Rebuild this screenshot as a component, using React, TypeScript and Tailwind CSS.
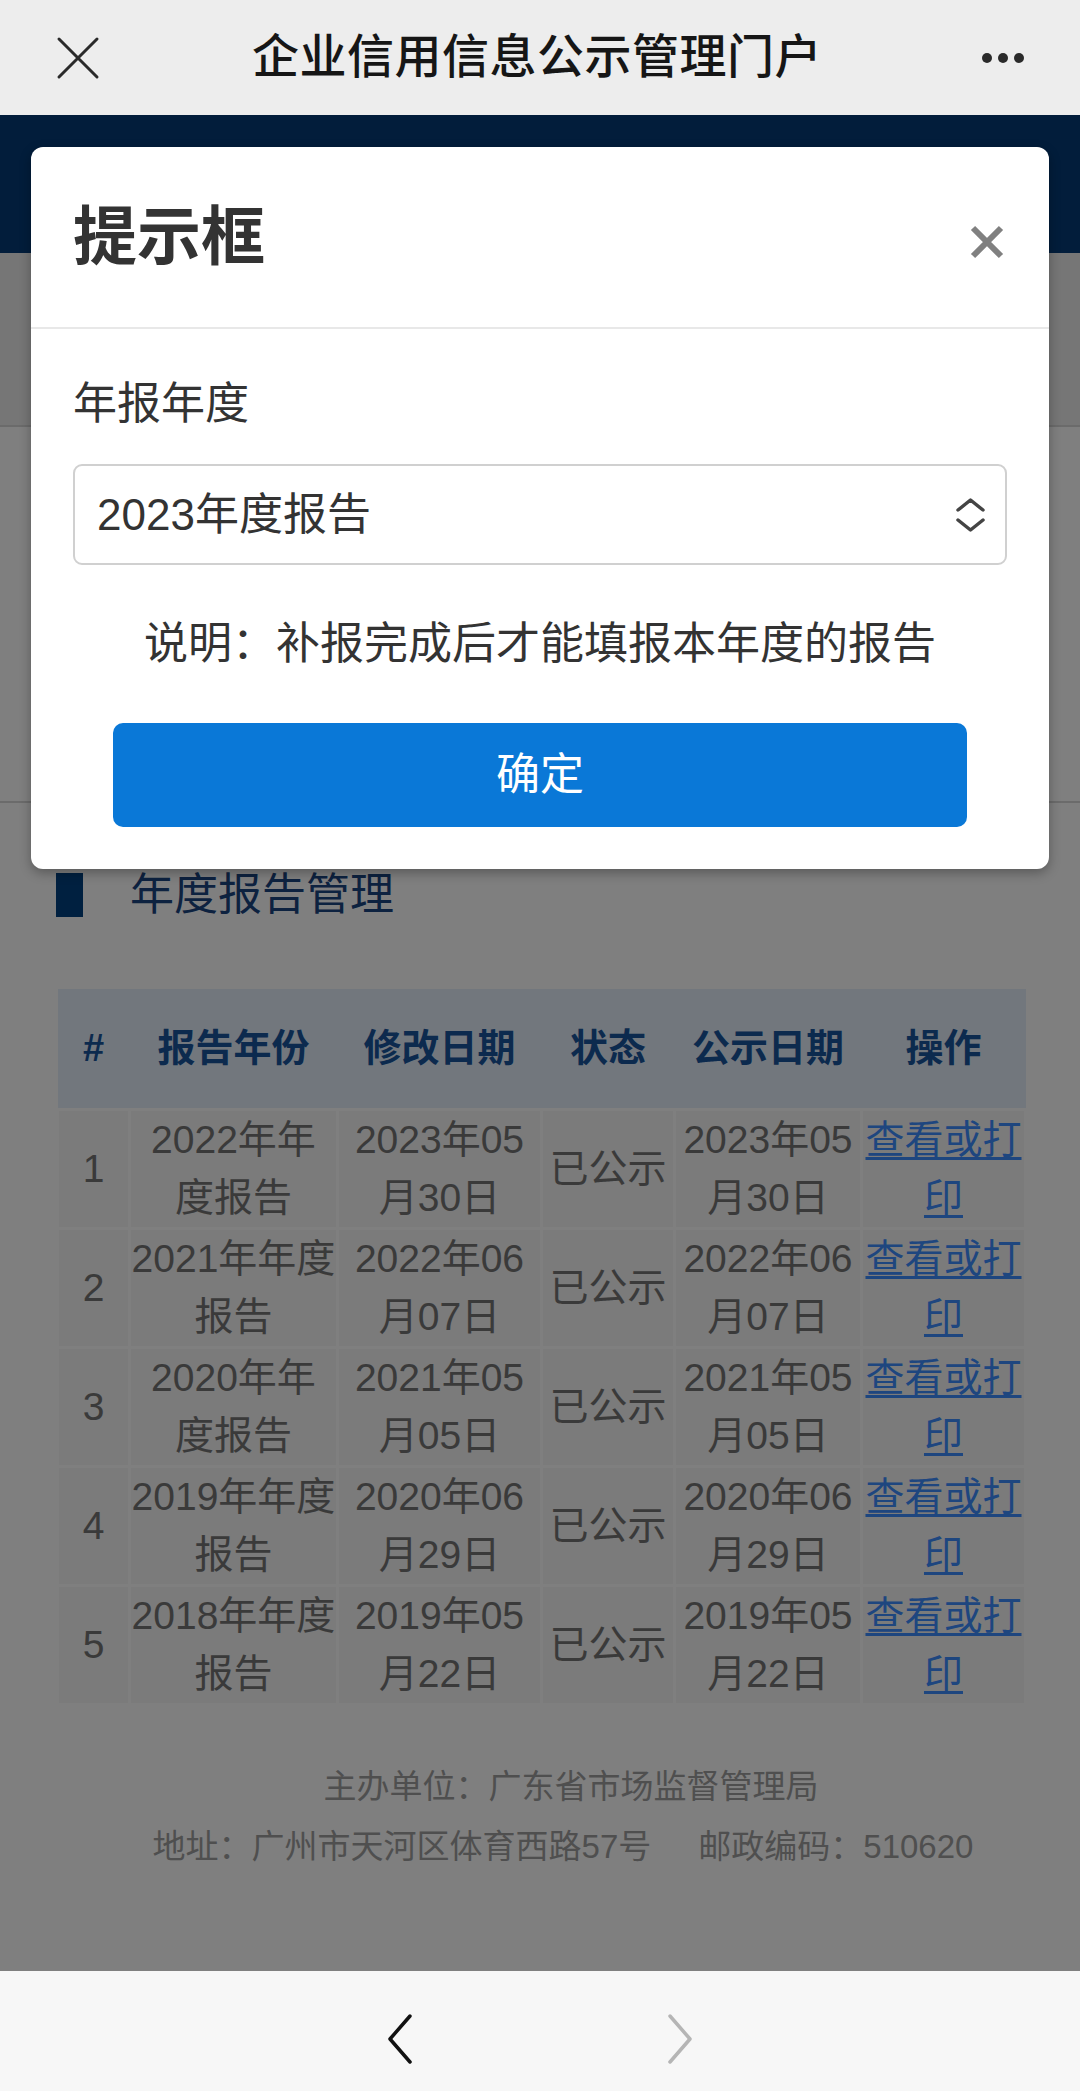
import React from "react";

const rows = [
  { no: "1", year: ["2022年年", "度报告"], edit: ["2023年05", "月30日"], pub: ["2023年05", "月30日"] },
  { no: "2", year: ["2021年年度", "报告"], edit: ["2022年06", "月07日"], pub: ["2022年06", "月07日"] },
  { no: "3", year: ["2020年年", "度报告"], edit: ["2021年05", "月05日"], pub: ["2021年05", "月05日"] },
  { no: "4", year: ["2019年年度", "报告"], edit: ["2020年06", "月29日"], pub: ["2020年06", "月29日"] },
  { no: "5", year: ["2018年年度", "报告"], edit: ["2019年05", "月22日"], pub: ["2019年05", "月22日"] },
];

const headers = ["#", "报告年份", "修改日期", "状态", "公示日期", "操作"];

function TwoLines({ lines }: { lines: string[] }) {
  return (
    <div className="flex flex-col items-center whitespace-nowrap">
      {lines.map((l) => (
        <span key={l}>{l}</span>
      ))}
    </div>
  );
}

export default function App() {
  return (
    <div className="w-[1080px] h-[2091px] flex flex-col overflow-hidden font-['Liberation_Sans','Noto_Sans_CJK_SC',sans-serif]">
      {/* browser top bar */}
      <div className="h-[115px] shrink-0 bg-[#ededed] flex items-center justify-between px-[56px]">
        <svg width="44" height="44" viewBox="0 0 44 44">
          <path d="M3 3 L41 41 M41 3 L3 41" stroke="#2a2a2a" strokeWidth="3" strokeLinecap="round" />
        </svg>
        <div className="text-[47px] font-medium text-[#161616] tracking-[0.5px]">企业信用信息公示管理门户</div>
        <div className="flex gap-[6px] w-[50px] justify-end">
          <span className="w-[10px] h-[10px] rounded-full bg-[#2a2a2a]" />
          <span className="w-[10px] h-[10px] rounded-full bg-[#2a2a2a]" />
          <span className="w-[10px] h-[10px] rounded-full bg-[#2a2a2a]" />
        </div>
      </div>

      {/* page */}
      <div className="relative flex-1 bg-white overflow-hidden">
        <div className="h-[138px] bg-[#043a76]" />
        <div className="h-[174px] bg-[#ededed] border-b-2 border-[#d6d6d6]" />
        <div className="h-[376px] bg-white border-b-2 border-[#d6d6d6]" />

        <div className="px-[56px]">
          <div className="mt-[70px] flex items-center h-[44px]">
            <span className="w-[27px] h-[44px] bg-[#004080]" />
            <span className="ml-[47px] text-[44px] leading-none text-[#1a4480]">年度报告管理</span>
          </div>

          <table className="mt-[72px] w-[968px] table-fixed border-collapse text-[39px] text-[#757575]">
            <colgroup>
              <col className="w-[72px]" />
              <col className="w-[208px]" />
              <col className="w-[204px]" />
              <col className="w-[133px]" />
              <col className="w-[187px]" />
              <col className="w-[164px]" />
            </colgroup>
            <thead>
              <tr className="h-[120px] bg-[#e4eefa]">
                {headers.map((h) => (
                  <th key={h} className="font-bold text-[38px] text-[#18549c] text-center p-0">
                    {h}
                  </th>
                ))}
              </tr>
            </thead>
            <tbody>
              {rows.map((r) => (
                <tr key={r.no} className="h-[118px] leading-[58px]">
                  <td className="bg-[#f6f6f6] border-[3px] border-white text-center p-0">{r.no}</td>
                  <td className="bg-[#f6f6f6] border-[3px] border-white p-0">
                    <TwoLines lines={r.year} />
                  </td>
                  <td className="bg-[#f6f6f6] border-[3px] border-white p-0">
                    <TwoLines lines={r.edit} />
                  </td>
                  <td className="bg-[#f6f6f6] border-[3px] border-white text-center p-0 whitespace-nowrap">已公示</td>
                  <td className="bg-[#f6f6f6] border-[3px] border-white p-0">
                    <TwoLines lines={r.pub} />
                  </td>
                  <td className="bg-[#f6f6f6] border-[3px] border-white p-0">
                    <div className="flex flex-col items-center whitespace-nowrap text-[#3c8cff] underline underline-offset-4">
                      <span>查看或打</span>
                      <span>印</span>
                    </div>
                  </td>
                </tr>
              ))}
            </tbody>
          </table>

          <div className="mt-[51px] flex flex-col items-center text-[33px] text-[#9e9e9e] leading-[60px]">
            <div className="pl-[62px]">主办单位：广东省市场监督管理局</div>
            <div className="pl-[46px] flex gap-[47px]">
              <span>地址：广州市天河区体育西路57号</span>
              <span>邮政编码：510620</span>
            </div>
          </div>
        </div>

        {/* mask */}
        <div className="absolute inset-0 bg-black/50" />

        {/* dialog */}
        <div className="absolute top-[32px] left-[31px] w-[1018px] bg-white rounded-[12px] shadow-[0_4px_12px_rgba(0,0,0,0.3)]">
          <div className="h-[182px] flex items-center justify-between pl-[42px] pr-[45px] border-b-2 border-[#e8e8e8]">
            <div className="text-[64px] font-bold text-[#333]">提示框</div>
            <svg className="mt-[10px]" width="34" height="34" viewBox="0 0 34 34">
              <path d="M3 3 L31 31 M31 3 L3 31" stroke="#808080" strokeWidth="6" />
            </svg>
          </div>
          <div className="px-[42px] pt-[45px] pb-[42px]">
            <div className="text-[44px] leading-[60px] text-[#333]">年报年度</div>
            <div className="mt-[30px] h-[101px] border-2 border-[#d0d0d0] rounded-[9px] flex items-center justify-between pl-[22px] pr-[19px]">
              <span className="text-[44px] text-[#333]">2023年度报告</span>
              <svg width="31" height="36" viewBox="0 0 31 36">
                <path d="M3 13 L15.5 3 L28 13 M3 23 L15.5 33 L28 23" fill="none" stroke="#444" strokeWidth="3.5" strokeLinecap="round" strokeLinejoin="round" />
              </svg>
            </div>
            <div className="mt-[49px] text-center text-[44px] leading-[60px] text-[#333]">说明：补报完成后才能填报本年度的报告</div>
            <div className="mt-[49px] mx-[40px] h-[104px] rounded-[10px] bg-[#0a78d7] flex items-center justify-center text-[44px] text-white">
              确定
            </div>
          </div>
        </div>
      </div>

      {/* browser bottom bar */}
      <div className="h-[120px] shrink-0 bg-[#f7f7f7] flex items-center justify-center gap-[252px] pt-[16px]">
        <svg width="28" height="52" viewBox="0 0 28 52">
          <path d="M24 3 L4 26 L24 49" fill="none" stroke="#111" strokeWidth="3.5" strokeLinecap="round" strokeLinejoin="round" />
        </svg>
        <svg width="28" height="52" viewBox="0 0 28 52">
          <path d="M4 3 L24 26 L4 49" fill="none" stroke="#b5b5b5" strokeWidth="3.5" strokeLinecap="round" strokeLinejoin="round" />
        </svg>
      </div>
    </div>
  );
}
